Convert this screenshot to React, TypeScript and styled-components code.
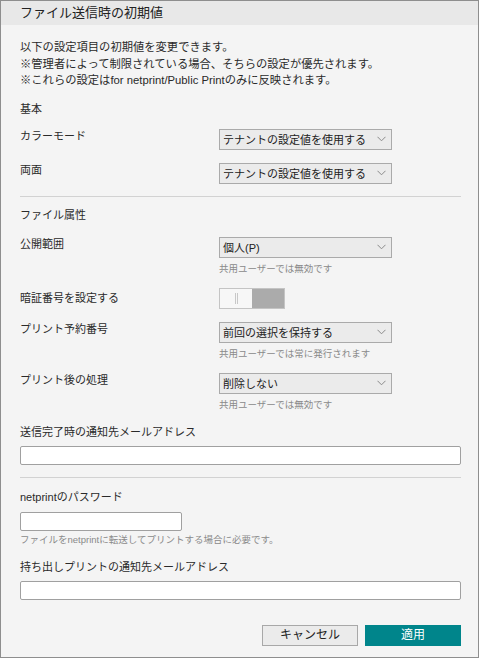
import React from "react";
import styled, { createGlobalStyle } from "styled-components";

const GlobalStyle = createGlobalStyle`
  html, body { margin: 0; padding: 0; background: #f4f4f4; }
  * { box-sizing: border-box; }
  body {
    font-family: "Liberation Sans", "Noto Sans CJK JP", sans-serif;
    color: #2a2a2a;
  }
`;

const Window = styled.div`
  width: 479px;
  height: 658px;
  border: 1px solid #8e8e8e;
  background: #f4f4f4;
  display: flex;
  flex-direction: column;
  overflow: hidden;
`;

const Header = styled.div`
  height: 24px;
  flex: none;
  background: #e8e8e8;
  padding-left: 19px;
  font-size: 13px;
  line-height: 24px;
  color: #222;
`;

const Body = styled.div`
  padding: 0 17px 0 19px;
  display: flex;
  flex-direction: column;
`;

const Description = styled.p`
  margin: 14px 0 0;
  font-size: 11.3px;
  line-height: 16.5px;
  color: #2a2a2a;
`;

const SectionTitle = styled.div<{ $mt: number }>`
  margin-top: ${(p) => p.$mt}px;
  font-size: 11px;
  line-height: 16px;
  color: #2a2a2a;
`;

const FieldRow = styled.div<{ $mt: number; $center?: boolean }>`
  margin-top: ${(p) => p.$mt}px;
  display: grid;
  grid-template-columns: 199px 1fr;
  align-items: ${(p) => (p.$center ? "center" : "start")};
`;

const FieldLabel = styled.div`
  font-size: 11px;
  line-height: 14px;
  color: #2a2a2a;
`;

const Control = styled.div`
  display: flex;
  flex-direction: column;
`;

const SelectBox = styled.div`
  width: 173px;
  height: 21px;
  border: 1px solid #aaa;
  background: #ebebeb;
  display: flex;
  align-items: center;
  justify-content: space-between;
  padding: 0 5px 0 3px;
  font-size: 11px;
  color: #222;
`;

const Hint = styled.div<{ $mt: number }>`
  margin-top: ${(p) => p.$mt}px;
  font-size: 9.5px;
  line-height: 14px;
  color: #8a8a8a;
`;

const Toggle = styled.div`
  width: 66px;
  height: 21px;
  border: 1px solid #c4c4c4;
  display: flex;
`;

const ToggleOff = styled.div`
  flex: 0 0 32px;
  background: #f7f7f7;
  display: flex;
  align-items: center;
  justify-content: center;
  gap: 1px;
`;

const ToggleMark = styled.span`
  width: 1px;
  height: 11px;
  background: #c8c8c8;
`;

const ToggleOn = styled.div`
  flex: 1;
  background: #ababab;
`;

const BlockLabel = styled.div<{ $mt: number }>`
  margin-top: ${(p) => p.$mt}px;
  font-size: 11px;
  line-height: 16px;
  color: #2a2a2a;
`;

const TextInput = styled.input<{ $mt: number; $width?: number }>`
  margin: ${(p) => p.$mt}px 0 0;
  width: ${(p) => (p.$width ? `${p.$width}px` : "441px")};
  height: 19px;
  border: 1px solid #a0a0a0;
  border-radius: 2px;
  background: #fff;
  padding: 0 4px;
  font-size: 11px;
  outline: none;
`;

const Divider = styled.hr<{ $mt: number }>`
  margin: ${(p) => p.$mt}px 0 0;
  width: 441px;
  height: 1px;
  border: 0;
  background: #d2d2d2;
`;

const Footer = styled.div`
  margin-top: 25px;
  width: 441px;
  display: flex;
  justify-content: flex-end;
  gap: 7px;
`;

const Button = styled.button<{ $primary?: boolean }>`
  width: 96px;
  height: 21px;
  padding: 0;
  font-family: inherit;
  font-size: 12px;
  line-height: 19px;
  border: 1px solid ${(p) => (p.$primary ? "#00858b" : "#a8a8a8")};
  background: ${(p) => (p.$primary ? "#00858b" : "#ebebeb")};
  color: ${(p) => (p.$primary ? "#fff" : "#222")};
`;

const Chevron = () => (
  <svg width="9" height="6" viewBox="0 0 9 6">
    <path d="M0.5 0.8 L4.5 4.8 L8.5 0.8" fill="none" stroke="#8a8a8a" strokeWidth="1" />
  </svg>
);

const Select = ({ value }: { value: string }) => (
  <SelectBox>
    <span>{value}</span>
    <Chevron />
  </SelectBox>
);

export default function App() {
  return (
    <>
      <GlobalStyle />
      <Window>
        <Header>ファイル送信時の初期値</Header>
        <Body>
          <Description>
            以下の設定項目の初期値を変更できます。
            <br />
            ※管理者によって制限されている場合、そちらの設定が優先されます。
            <br />
            ※これらの設定はfor netprint/Public Printのみに反映されます。
          </Description>

          <SectionTitle $mt={12}>基本</SectionTitle>
          <FieldRow $mt={12}>
            <FieldLabel>カラーモード</FieldLabel>
            <Control>
              <Select value="テナントの設定値を使用する" />
            </Control>
          </FieldRow>
          <FieldRow $mt={13}>
            <FieldLabel>両面</FieldLabel>
            <Control>
              <Select value="テナントの設定値を使用する" />
            </Control>
          </FieldRow>

          <Divider $mt={12} />

          <SectionTitle $mt={10}>ファイル属性</SectionTitle>
          <FieldRow $mt={14}>
            <FieldLabel>公開範囲</FieldLabel>
            <Control>
              <Select value="個人(P)" />
              <Hint $mt={4}>共用ユーザーでは無効です</Hint>
            </Control>
          </FieldRow>
          <FieldRow $mt={12} $center>
            <FieldLabel>暗証番号を設定する</FieldLabel>
            <Control>
              <Toggle>
                <ToggleOff>
                  <ToggleMark />
                  <ToggleMark />
                </ToggleOff>
                <ToggleOn />
              </Toggle>
            </Control>
          </FieldRow>
          <FieldRow $mt={13}>
            <FieldLabel>プリント予約番号</FieldLabel>
            <Control>
              <Select value="前回の選択を保持する" />
              <Hint $mt={4}>共用ユーザーでは常に発行されます</Hint>
            </Control>
          </FieldRow>
          <FieldRow $mt={12}>
            <FieldLabel>プリント後の処理</FieldLabel>
            <Control>
              <Select value="削除しない" />
              <Hint $mt={4}>共用ユーザーでは無効です</Hint>
            </Control>
          </FieldRow>

          <BlockLabel $mt={12}>送信完了時の通知先メールアドレス</BlockLabel>
          <TextInput $mt={6} type="text" />

          <Divider $mt={12} />

          <BlockLabel $mt={11}>netprintのパスワード</BlockLabel>
          <TextInput $mt={7} $width={162} type="password" />
          <Hint $mt={2}>ファイルをnetprintに転送してプリントする場合に必要です。</Hint>

          <BlockLabel $mt={12}>持ち出しプリントの通知先メールアドレス</BlockLabel>
          <TextInput $mt={6} type="text" />

          <Footer>
            <Button>キャンセル</Button>
            <Button $primary>適用</Button>
          </Footer>
        </Body>
      </Window>
    </>
  );
}
